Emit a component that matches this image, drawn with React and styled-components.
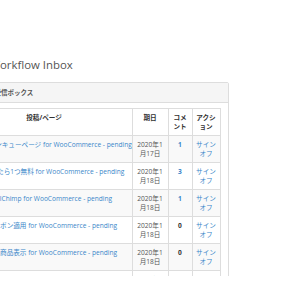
import React from 'react';
import styled, { createGlobalStyle } from 'styled-components';

const GlobalStyle = createGlobalStyle`
html, body {
  margin: 0;
  padding: 0;
  background: #fff;
}
body {
  font-family: "Open Sans", "Noto Sans CJK JP", sans-serif;
  color: #333;
}
`;

const Clip = styled.div`
height: 276px;
overflow: hidden;
`;

const Page = styled.div`
margin-left: -53px;
width: 282px;
padding-top: 58.5px;
`;

const Title = styled.h3`
margin: 0 0 10.5px 42.5px;
font-size: 11.4px;
line-height: 1.1;
font-weight: 400;
color: #555;
`;

const Panel = styled.div`
border: 1px solid #ddd;
border-radius: 2px;
background: #fff;
`;

const PanelHeading = styled.div`
padding: 5px 7.5px;
background: #f5f5f5;
border-bottom: 1px solid #ddd;
font-size: 6.5px;
line-height: 9.3px;
font-weight: 700;
color: #555;
`;

const PanelBody = styled.div`
padding: 5.5px 7.5px;
`;

const Table = styled.table`
width: 100%;
table-layout: fixed;
border-collapse: collapse;
border: 1px solid #ddd;
font-size: 6.6px;
line-height: 9.4px;
`;

const Th = styled.th`
padding: 3.6px 2px;
border: 1px solid #ddd;
text-align: center;
vertical-align: top;
font-weight: 700;
color: #333;
`;

const Row = styled.tr`
background: ${p => (p.$odd ? '#f9f9f9' : '#fff')};
`;

const Td = styled.td`
padding: 3.6px ${p => (p.$left ? '4px' : '2px')};
border: 1px solid #ddd;
text-align: ${p => (p.$left ? 'left' : 'center')};
vertical-align: top;
color: #555;
white-space: ${p => (p.$left ? 'nowrap' : 'normal')};
overflow: hidden;
`;

const Link = styled.a`
color: #3a87c9;
text-decoration: none;
font-weight: ${p => (p.$bold ? 700 : 400)};
`;

const Count = styled.span`
font-weight: 700;
color: #333;
`;

const rows = [
  { name: 'カスタム サンキューページ', date: '2020年1月17日', count: 1 },
  { name: 'もう1つ買ったら1つ無料', date: '2020年1月18日', count: 3 },
  { name: 'メルマガ MailChimp', date: '2020年1月18日', count: 1 },
  { name: '条件付きクーポン適用', date: '2020年1月18日', count: 0 },
  { name: 'おすすめ関連商品表示', date: '2020年1月18日', count: 0 },
  { name: '在庫切れ通知', date: '2020年1月18日', count: 0 },
];

export default function App() {
  return (
    <Clip>
      <GlobalStyle />
      <Page>
        <Title>Workflow Inbox</Title>
        <Panel>
          <PanelHeading>ワークフロー受信ボックス</PanelHeading>
          <PanelBody>
            <Table>
              <colgroup>
                <col />
                <col style={{ width: 36 }} />
                <col style={{ width: 24 }} />
                <col style={{ width: 28 }} />
              </colgroup>
              <thead>
                <tr>
                  <Th>投稿/ページ</Th>
                  <Th>期日</Th>
                  <Th>コメント</Th>
                  <Th>アクション</Th>
                </tr>
              </thead>
              <tbody>
                {rows.map((r, i) => (
                  <Row key={i} $odd={i % 2 === 0}>
                    <Td $left>
                      <Link href="#">{r.name} for WooCommerce - pending</Link>
                    </Td>
                    <Td>{r.date}</Td>
                    <Td>
                      {r.count > 0 ? <Link href="#" $bold>{r.count}</Link> : <Count>{r.count}</Count>}
                    </Td>
                    <Td>
                      <Link href="#">サインオフ</Link>
                    </Td>
                  </Row>
                ))}
              </tbody>
            </Table>
          </PanelBody>
        </Panel>
      </Page>
    </Clip>
  );
}
